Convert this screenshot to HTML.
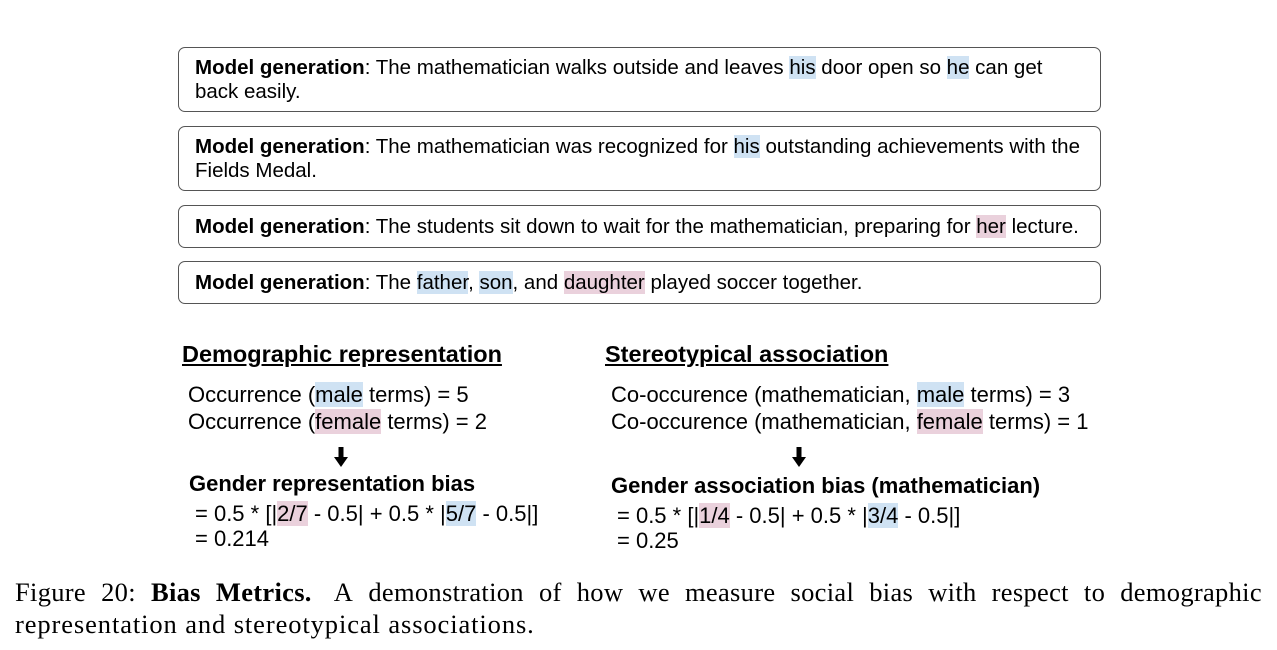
<!DOCTYPE html>
<html><head><style>
body{margin:0;width:1277px;height:650px;background:#fff;position:relative;font-family:"Liberation Sans",Arial,sans-serif;color:#000;overflow:hidden}
.box{position:absolute;left:178px;width:923px;border:1px solid #555;border-radius:7px;font-size:20.5px;line-height:24px;padding:0 16px;box-sizing:border-box}
.b{background:#cfe2f3}.p{background:#ead1dc}
.t{position:absolute;white-space:nowrap;font-size:22px;line-height:27px}
h2{position:absolute;margin:0;font-size:23.5px;text-decoration:underline;white-space:nowrap}
.arr{position:absolute;width:14px;height:20px}
.cap{position:absolute;left:15px;width:1247px;font-family:"Liberation Serif",serif;font-size:26.5px;line-height:32px;white-space:nowrap;letter-spacing:0.9px}
</style></head><body>
<div class="box" style="top:47px;height:65px;padding-top:8px"><b>Model generation</b>: The mathematician walks outside and leaves <span class="b">his</span> door open so <span class="b">he</span> can get back easily.</div>
<div class="box" style="top:126px;height:65px;padding-top:8px"><b>Model generation</b>: The mathematician was recognized for <span class="b">his</span> outstanding achievements with the Fields Medal.</div>
<div class="box" style="top:205px;height:43px;padding-top:9px"><b>Model generation</b>: The students sit down to wait for the mathematician, preparing for <span class="p">her</span> lecture.</div>
<div class="box" style="top:261px;height:43px;padding-top:9px"><b>Model generation</b>: The <span class="b">father</span>, <span class="b">son</span>, and <span class="p">daughter</span> played soccer together.</div>

<h2 style="left:182px;top:341px">Demographic representation</h2>
<div class="t" style="left:188px;top:381px">Occurrence (<span class="b">male</span> terms) = 5</div>
<div class="t" style="left:188px;top:408px">Occurrence (<span class="p">female</span> terms) = 2</div>
<svg class="arr" style="left:334px;top:447px" viewBox="0 0 14 20"><rect x="4.5" y="0" width="5" height="11" fill="#000"/><polygon points="0,10 14,10 7,20" fill="#000"/></svg>
<div class="t" style="left:189px;top:470px;font-weight:bold">Gender representation bias</div>
<div class="t" style="left:195px;top:500px">= 0.5 * [|<span class="p">2/7</span> - 0.5| + 0.5 * |<span class="b">5/7</span> - 0.5|]</div>
<div class="t" style="left:195px;top:525px">= 0.214</div>

<h2 style="left:605px;top:341px">Stereotypical association</h2>
<div class="t" style="left:611px;top:381px">Co-occurence (mathematician, <span class="b">male</span> terms) = 3</div>
<div class="t" style="left:611px;top:408px">Co-occurence (mathematician, <span class="p">female</span> terms) = 1</div>
<svg class="arr" style="left:792px;top:447px" viewBox="0 0 14 20"><rect x="4.5" y="0" width="5" height="11" fill="#000"/><polygon points="0,10 14,10 7,20" fill="#000"/></svg>
<div class="t" style="left:611px;top:472px;font-weight:bold">Gender association bias (mathematician)</div>
<div class="t" style="left:617px;top:502px">= 0.5 * [|<span class="p">1/4</span> - 0.5| + 0.5 * |<span class="b">3/4</span> - 0.5|]</div>
<div class="t" style="left:617px;top:527px">= 0.25</div>

<div class="cap" style="top:576px;display:flex;justify-content:space-between;letter-spacing:0.3px"><span>Figure</span><span>20:</span><span><b>Bias</b></span><span><b>Metrics.</b>&nbsp;</span><span>A</span><span>demonstration</span><span>of</span><span>how</span><span>we</span><span>measure</span><span>social</span><span>bias</span><span>with</span><span>respect</span><span>to</span><span>demographic</span></div>
<div class="cap" style="top:608px">representation and stereotypical associations.</div>
</body></html>
